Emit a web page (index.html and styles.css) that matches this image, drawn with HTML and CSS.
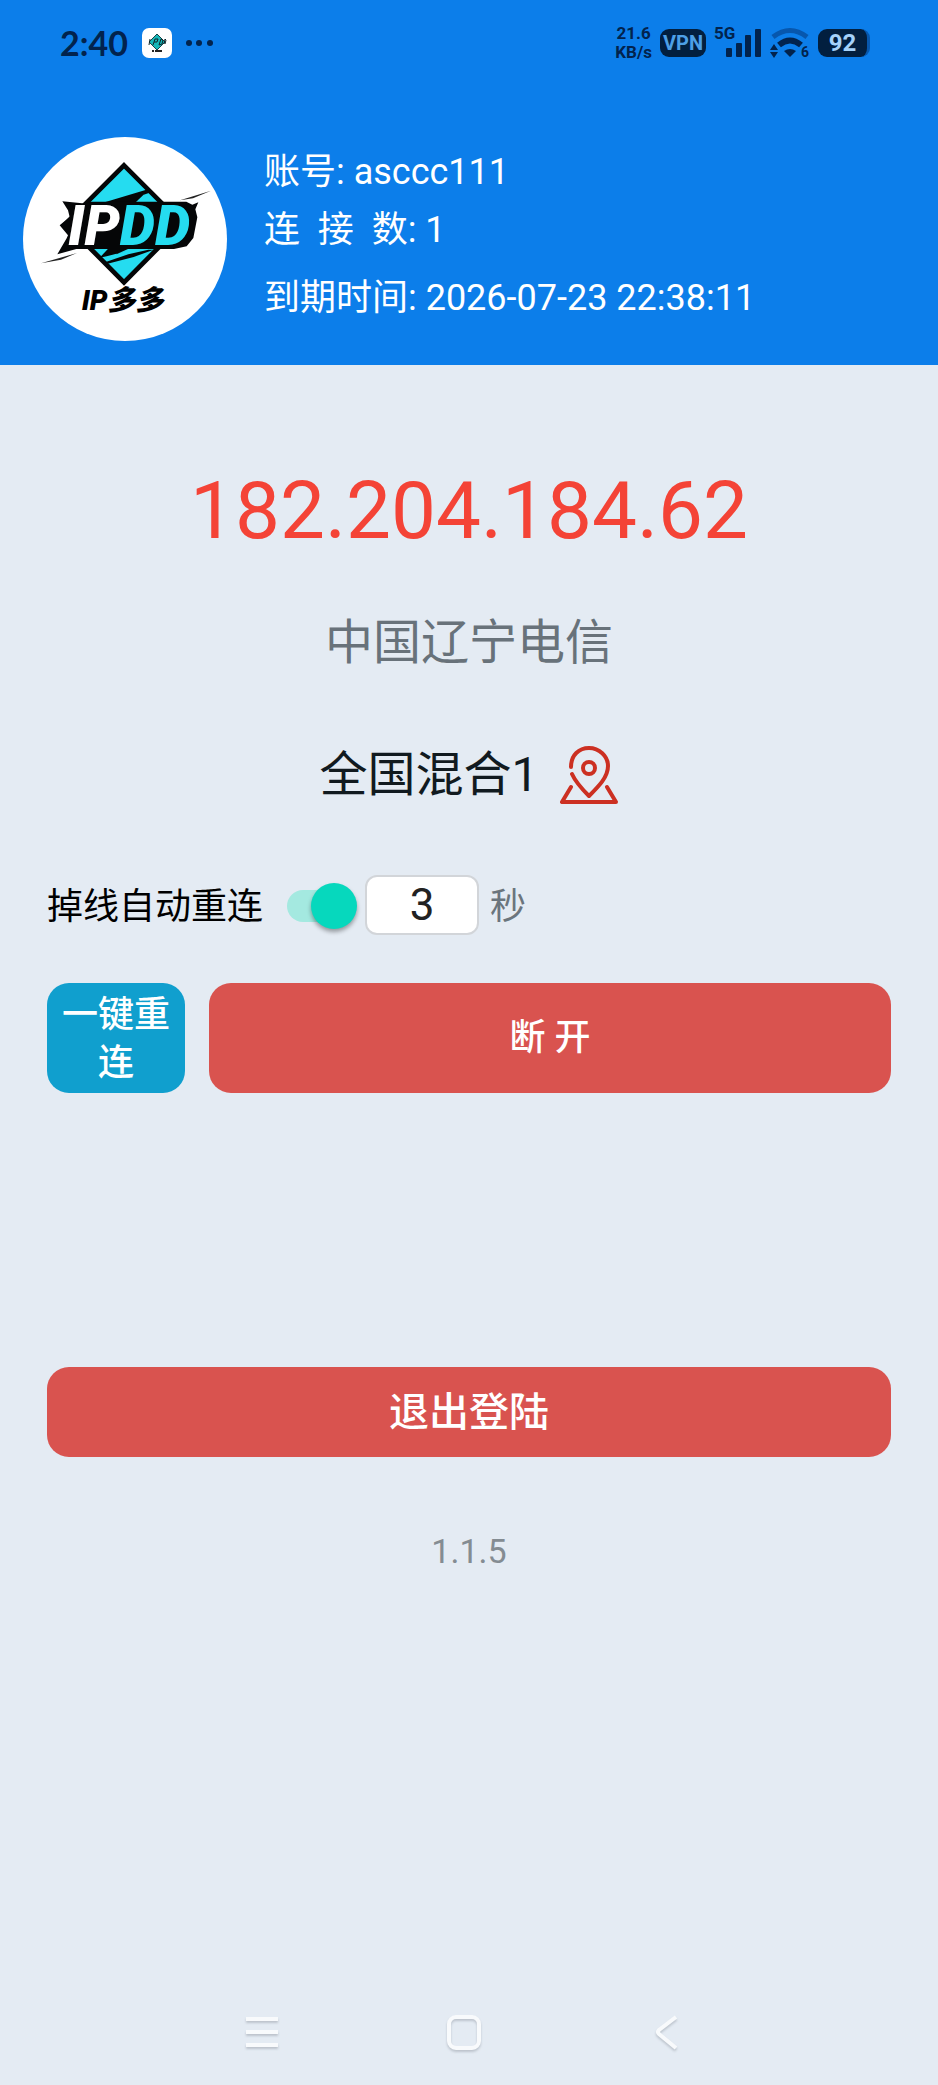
FILE: index.html
```html
<!DOCTYPE html>
<html lang="zh-CN">
<head>
<meta charset="utf-8">
<meta name="viewport" content="width=device-width, initial-scale=1">
<title>IP多多</title>
<link rel="stylesheet" href="styles.css">
</head>
<body>
<div class="app">
  <header class="header">
    <div class="status">
      <div class="status-left">
        <span class="clock">2:40</span>
        <svg class="app-badge" viewBox="0 0 30 30" aria-hidden="true">
          <rect width="30" height="30" rx="7" fill="#fff"/>
          <path d="M15 6l8 8-8 8-8-8z" fill="#16b7b8" stroke="#174247"/>
          <path d="M8 11l-1 6M11 17l2-6h3l-1 3h-3M17 17l2-6 2 1-1 4zM22 16l1-5 1 1-1 4" fill="none" stroke="#10282c" stroke-width="1"/>
          <path d="M10 23h2m1 0h7" stroke="#222" stroke-width="2"/>
        </svg>
        <svg class="dots" viewBox="0 0 28 8" aria-hidden="true"><circle cx="3" cy="4" r="3"/><circle cx="13" cy="4" r="3"/><circle cx="24" cy="4" r="3"/></svg>
      </div>
      <div class="status-right">
        <div class="speed"><span>21.6</span><span>KB/s</span></div>
        <span class="vpn">VPN</span>
        <div class="signal">
          <svg viewBox="0 0 48 32" aria-hidden="true">
            <rect x="12" y="21" width="6" height="9" rx="1"/><rect x="22" y="16" width="6" height="14" rx="1"/><rect x="31" y="8" width="6" height="22" rx="1"/><rect x="41" y="2" width="6" height="28" rx="1"/>
          </svg>
          <span class="signal-label">5G</span>
        </div>
        <svg class="wifi" viewBox="0 0 40 32" aria-hidden="true">
          <path d="M3 10Q20-3 37 10" fill="none" stroke="#0757ad" stroke-width="5"/>
          <path d="M9 18q11-9 22 0" fill="none" stroke="#02234d" stroke-width="6"/>
          <path d="M14 24q6-4 12 0l-6 6z"/>
          <path d="M0 23l4-6 4 6zM0 25l4 6 4-6z"/>
          <text x="31" y="30">6</text>
        </svg>
        <span class="battery">92</span>
      </div>
    </div>
    <div class="profile">
      <svg class="logo" viewBox="70 50 612 612" role="img" aria-label="IP多多">
        <circle cx="376" cy="356" r="306" fill="#fff"/>
        <path d="M373 135L548 310 373 486 198 310z" fill="#25dcf0" stroke="#050607" stroke-width="14"/>
        <path d="M300 250l140-42 14 8-68 23 48-18-40 38z" fill="#050607"/>
        <path d="M316 426l70-24 60-14h16l-60 22-84 22z" fill="#050607"/>
        <path d="M300 412l36-38h40l-25 26 30-8-60 16z" fill="#050607"/>
        <path d="M188 243l74 7 8-6h290l18 9 18-7-9 21 6 24-12 62-20 25-38 8H385l-35 16 6-16H230l-57 16 28-48 4-9-25-30 30-25-5-20z" fill="#050607"/>
        <path d="M541 240l93-29-54 23zM124 429l108-31-48 20z" fill="#222"/>
        <text class="logo-word" x="205" y="375"><tspan fill="#fff">IP</tspan><tspan fill="#25dcf0">DD</tspan></text>
        <text class="logo-name" x="246" y="569">IP多多</text>
      </svg>
      <div class="account">
        <p class="account-line">账号: asccc111</p>
        <p class="account-line">连&nbsp; 接&nbsp; 数: 1</p>
        <p class="account-line expiry">到期时间: 2026-07-23 22:38:11</p>
      </div>
    </div>
  </header>
  <main class="main">
    <h1 class="ip">182.204.184.62</h1>
    <p class="place">中国辽宁电信</p>
    <button class="region" type="button">
      <span>全国混合1</span>
      <svg class="pin" viewBox="0 0 58 58" aria-hidden="true">
        <path d="M11 21C11 9 19 2 29 2s19 8 19 18c0 11-9 20-19 30C23 44 16 37 12 28"/>
        <circle cx="29" cy="22" r="6"/>
        <path d="M11 41L2 56h54l-9-15"/>
      </svg>
    </button>
    <div class="reconnect">
      <label for="auto">掉线自动重连</label>
      <input class="switch" id="auto" type="checkbox" role="switch" checked>
      <input class="seconds" id="seconds" type="text" inputmode="numeric" value="3">
      <label class="unit" for="seconds">秒</label>
    </div>
    <div class="actions">
      <button class="btn again" type="button">一键重连</button>
      <button class="btn cut" type="button">断 开</button>
    </div>
    <button class="btn logout" type="button">退出登陆</button>
    <p class="version">1.1.5</p>
  </main>
  <nav class="nav">
    <button class="nav-btn" type="button" aria-label="菜单"><svg viewBox="0 0 36 36"><path d="M2 4h32M2 17h32M2 30h32"/></svg></button>
    <button class="nav-btn" type="button" aria-label="主页"><svg viewBox="0 0 36 36"><rect x="3" y="2" width="30" height="31" rx="7"/></svg></button>
    <button class="nav-btn" type="button" aria-label="返回"><svg viewBox="0 0 36 36"><path d="M27 2L10 15q-2 2 0 4l17 14"/></svg></button>
  </nav>
</div>
</body>
</html>
```
FILE: styles.css
```css
* { box-sizing: border-box; }

body {
  margin: 0;
  background: #e4ebf3;
  color: #111a1f;
  font-family: Roboto, "Noto Sans CJK SC", sans-serif;
  font-size: 36px;
  line-height: 48px;
}

h1, p { margin: 0; font-weight: 400; }

button {
  border: 0;
  padding: 0;
  background: none;
  color: inherit;
  font: inherit;
}

svg { display: block; }

.app {
  display: flex;
  flex-direction: column;
  min-height: 100vh;
}

.header {
  padding-bottom: 24px;
  background: #0c7eea;
  color: #fff;
}

.status {
  display: flex;
  justify-content: space-between;
  align-items: center;
  height: 86px;
  padding: 0 68px 0 60px;
  color: #02234d;
}

.status-left, .status-right { display: flex; align-items: center; }
.status-left { gap: 14px; }
.status-right { gap: 8px; }

.clock { font: 700 34px/40px Lato, sans-serif; }
.app-badge { width: 30px; height: 30px; }
.dots { width: 28px; height: 8px; fill: #02234d; }

.speed {
  display: flex;
  flex-direction: column;
  align-items: center;
  font: 700 17px/19px Roboto, sans-serif;
}

.vpn, .battery {
  border-radius: 9px;
  background: #021f3f;
  color: #4d9fe6;
  text-align: center;
  line-height: 28px;
}

.vpn { width: 46px; font-size: 20px; font-weight: 700; }

.signal { position: relative; width: 48px; height: 32px; fill: #02234d; }
.signal-label {
  position: absolute;
  top: -3px;
  left: 0;
  font-size: 17px;
  font-weight: 700;
  line-height: 19px;
}

.wifi { width: 40px; height: 32px; fill: #02234d; }
.wifi text { font: 700 14px Roboto, sans-serif; }

.battery {
  width: 52px;
  border-right: 3px solid #0757ad;
  color: #a5d2fa;
  font-size: 24px;
  font-weight: 700;
}

.profile {
  display: flex;
  gap: 37px;
  padding: 51px 23px 0;
}

.logo { flex: none; width: 204px; height: 204px; }
.logo-word { font: italic 900 168px Roboto, sans-serif; }
.logo-name { font: italic 900 84px Roboto, "Noto Sans CJK SC", sans-serif; }

.account {
  display: flex;
  flex-direction: column;
  gap: 10px;
  padding-top: 11px;
}
.account-line { white-space: nowrap; }
.expiry { padding-top: 10px; }

.main {
  display: flex;
  flex: 1;
  flex-direction: column;
  padding: 96px 47px 0;
}

.ip {
  color: #f44336;
  font-size: 80px;
  line-height: 100px;
  text-align: center;
}

.place {
  margin-top: 50px;
  color: #68727a;
  font-size: 48px;
  line-height: 64px;
  text-align: center;
}

.region {
  display: flex;
  align-items: center;
  align-self: center;
  gap: 22px;
  margin-top: 68px;
  font-size: 48px;
  line-height: 64px;
}

.pin {
  width: 58px;
  height: 58px;
  fill: none;
  stroke: #cc3022;
  stroke-width: 4;
  stroke-linecap: round;
  stroke-linejoin: round;
}

.reconnect {
  display: flex;
  align-items: center;
  margin-top: 68px;
  color: #000;
}

.reconnect label { padding-top: 4px; }

.switch {
  position: relative;
  width: 66px;
  height: 32px;
  margin: 2px 12px 0 24px;
  border-radius: 16px;
  appearance: none;
  background: #a4e9e0;
}

.switch::before {
  content: "";
  position: absolute;
  top: -7px;
  right: -4px;
  width: 46px;
  height: 46px;
  border-radius: 50%;
  background: #06d8bd;
  box-shadow: 0 3px 4px rgb(0 0 0 / 35%);
}

.seconds {
  width: 114px;
  height: 60px;
  padding: 0;
  border: 2px solid #d2d5d9;
  border-radius: 12px;
  background: #fff;
  color: #222;
  font: 44px/56px Roboto, sans-serif;
  text-align: center;
}

.unit { margin-left: 11px; color: #6b757d; }

.actions {
  display: flex;
  gap: 24px;
  margin-top: 48px;
}

.btn {
  border-radius: 22px;
  background: #d9534f;
  color: #fff;
  font-weight: 500;
}

.again {
  width: 138px;
  padding: 8px 14px 6px;
  background: #109fce;
}
.cut { flex: 1; }

.logout {
  margin-top: 274px;
  padding: 16px 0 14px;
  font-size: 40px;
  line-height: 60px;
}

.version {
  margin-top: 70px;
  color: #848c92;
  font-size: 34px;
  text-align: center;
}

.nav {
  display: flex;
  justify-content: space-between;
  padding: 0 27% 34px 26%;
}

.nav-btn svg {
  width: 36px;
  height: 36px;
  fill: none;
  stroke: #f8fafc;
  stroke-width: 4;
  filter: drop-shadow(0 2px 1px rgb(70 80 90 / 25%));
}
```
